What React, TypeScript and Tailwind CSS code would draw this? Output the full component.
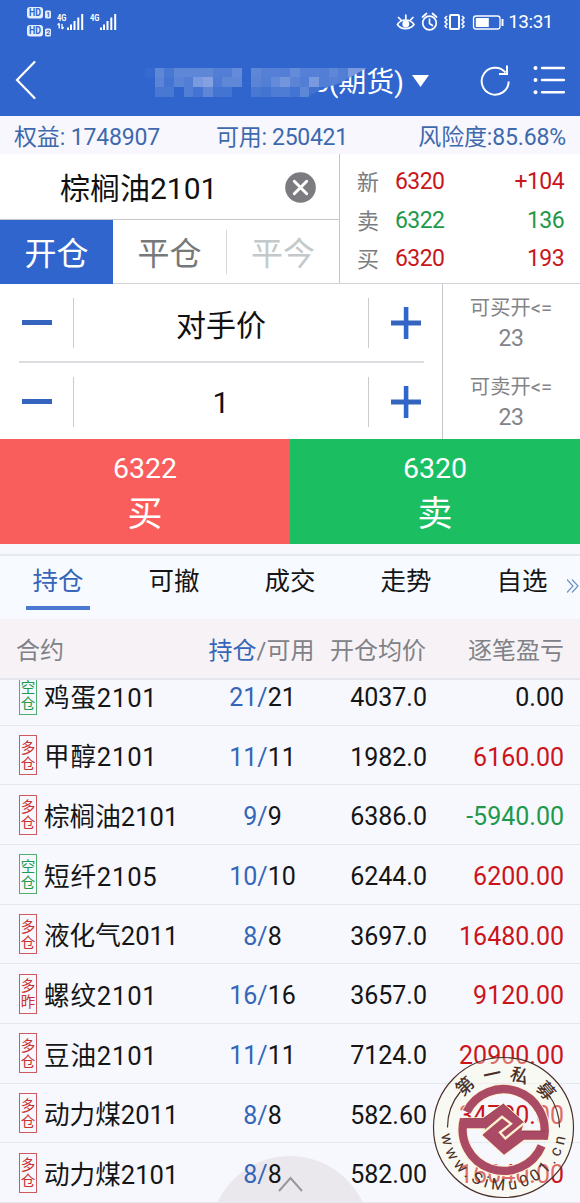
import React from 'react';

type Side = '多仓' | '空仓' | '多昨';

interface Position {
    side: Side;
    name: string;
    held: string;
    usable: string;
    price: string;
    profit: string;
}

const positions: Position[] = [
    { side: '空仓', name: '鸡蛋2101', held: '21', usable: '21', price: '4037.0', profit: '0.00' },
    { side: '多仓', name: '甲醇2101', held: '11', usable: '11', price: '1982.0', profit: '6160.00' },
    { side: '多仓', name: '棕榈油2101', held: '9', usable: '9', price: '6386.0', profit: '-5940.00' },
    { side: '空仓', name: '短纤2105', held: '10', usable: '10', price: '6244.0', profit: '6200.00' },
    { side: '多仓', name: '液化气2011', held: '8', usable: '8', price: '3697.0', profit: '16480.00' },
    { side: '多昨', name: '螺纹2101', held: '16', usable: '16', price: '3657.0', profit: '9120.00' },
    { side: '多仓', name: '豆油2101', held: '11', usable: '11', price: '7124.0', profit: '20900.00' },
    { side: '多仓', name: '动力煤2011', held: '8', usable: '8', price: '582.60', profit: '34780.00' },
    { side: '多仓', name: '动力煤2101', held: '8', usable: '8', price: '582.00', profit: '16040.00' },
];

const quotes = [
    { label: '新', price: '6320', volume: '+104', color: 'text-[#c8161d]' },
    { label: '卖', price: '6322', volume: '136', color: 'text-[#22994a]' },
    { label: '买', price: '6320', volume: '193', color: 'text-[#c8161d]' },
];

const tabs = ['持仓', '可撤', '成交', '走势', '自选'];

// opacity of each block in the masked account number, row by row
const mask = [
    [0.04, 0.27, 0.15, 0.27, 0.27, 0.27, 0.27, 0.2, 0.2, 0.3, 0, 0.27, 0.22, 0.22, 0.2, 0.3, 0.22, 0.22, 0.2, 0.28, 0.2, 0.42, 0.42, 0.35],
    [0, 0.25, 0.12, 0.25, 0.2, 0.42, 0.48, 0.18, 0.27, 0.27, 0, 0.25, 0.2, 0.3, 0.38, 0.25, 0.2, 0.42, 0.2, 0.22, 0.2, 0.2, 0.3, 0.3],
    [0, 0.15, 0.15, 0, 0.2, 0.12, 0.27, 0.12, 0.12, 0, 0, 0.15, 0.12, 0.18, 0.18, 0.12, 0.28, 0.1, 0.05, 0.05, 0, 0, 0, 0],
];

const Signal: React.FC<{ arrows?: boolean }> = ({ arrows }) => (
    <svg className="h-[18px] w-[30px]" viewBox="0 0 30 18" fill="#fff">
        <text x="0" y="8" fontSize="9.5" fontWeight="700" textLength="9.5" lengthAdjust="spacingAndGlyphs">4G</text>
        {arrows && <path d="M2.2 10.5v5M.7 12l1.5-1.7M5 11v5M6.7 14.2L5 16.2" stroke="#fff" strokeWidth="1.3" fill="none" />}
        <path d="M10 14.5h2V17h-2zM13 11.5h2V17h-2zM16.5 8h2v9h-2zM20.3 4.5h2V17h-2zM24.2 1h2v16h-2z" />
    </svg>
);

const HdBadge: React.FC<{ n: string }> = ({ n }) => (
    <svg className="h-[13px] w-[25px]" viewBox="0 0 25 13">
        <rect x="0" y="0" width="16" height="11.5" rx="3" fill="#e6eefc" />
        <text x="2" y="9.3" fontSize="10" fontWeight="700" fill="#2f65cd" textLength="12" lengthAdjust="spacingAndGlyphs">HD</text>
        <rect x="18" y="3.5" width="6" height="8" rx="1.5" fill="#e6eefc" />
        <text x="19" y="10.2" fontSize="7.5" fontWeight="700" fill="#2f65cd">{n}</text>
    </svg>
);

const StatusBar: React.FC = () => (
    <div className="flex h-[46px] items-start justify-between pt-[7px] pl-[27px] pr-[27px]">
        <div className="flex">
            <div className="flex flex-col gap-[5px]">
                <HdBadge n="1" />
                <HdBadge n="2" />
            </div>
            <div className="mt-[6px] ml-[5px] flex gap-[3px]">
                <Signal arrows />
                <Signal />
            </div>
        </div>
        <div className="mt-[4px] flex items-center">
            <svg className="-mt-[2px] h-[20px] w-[108px]" viewBox="0 0 108 20" fill="none" stroke="#fff" strokeWidth="1.7">
                <path d="M1.5 13.5C5 7.5 14 7.5 18 13.5C14 19 5 19 1.5 13.5z" />
                <circle cx="9.8" cy="13" r="2.6" fill="#fff" />
                <path d="M9.8 8V4M5 9L2.5 6.5M14.5 9L17 6.5" strokeLinecap="round" />
                <circle cx="33.5" cy="12" r="6.8" />
                <path d="M33.5 8v4.5l3 2M26.5 6l4-3.5M40.5 6l-4-3.5" strokeLinecap="round" />
                <rect x="54" y="4" width="9" height="14" rx="1" strokeWidth="2" />
                <path d="M51 5l-2 2 2 2-2 2 2 2-2 2 2 2M66 5l2 2-2 2 2 2-2 2 2 2-2 2" strokeWidth="1.5" />
                <rect x="77.5" y="5" width="26.5" height="13" rx="2.5" strokeWidth="1.3" />
                <rect x="79.8" y="7" width="13" height="9" fill="#fff" stroke="none" />
                <path d="M106.5 8v7" strokeWidth="2" />
            </svg>
            <span className="ml-[4px] text-[19px] leading-[22px] tracking-[-0.5px]">13:31</span>
        </div>
    </div>
);

const NavBar: React.FC = () => (
    <div className="relative flex h-[70px] items-center">
        <svg className="ml-[15px] h-[40px] w-[22px] shrink-0" viewBox="0 0 22 40" fill="none" stroke="#fff" strokeWidth="2.2" strokeLinecap="round">
            <path d="M19.5 1L2 19l17.5 18" />
        </svg>
        <div className="ml-[276px] flex w-[132px] shrink-0 items-center">
            <span className="w-[93px] pt-[3px] text-[28px] leading-[40px] whitespace-nowrap">5(期货)</span>
            <svg className="ml-[6px] h-[12px] w-[17px]" viewBox="0 0 17 12" fill="#fff"><path d="M0 0h17L8.5 12z" /></svg>
        </div>
        <svg className="absolute top-[17px] left-[140px] h-[40px] w-[240px]" viewBox="0 0 240 40" shapeRendering="crispEdges">
            <clipPath id="mask-edge">
                <path d="M0 0H240V4.7H227L200 20L182 26L168 34H0z" />
            </clipPath>
            <g clipPath="url(#mask-edge)">
                <path d="M0 0H240V40H0z" fill="#2f65cd" />
                {mask.map((row, y) =>
                    row.map((o, x) => (
                        <rect key={`${y}-${x}`} x={5 + x * 9.67} y={4.7 + y * 9.67} width="9.67" height="9.67" fill="#dfe4f5" fillOpacity={o} />
                    ))
                )}
            </g>
        </svg>
        <svg className="ml-[35px] h-[34px] w-[30px] shrink-0" viewBox="0 0 30 34" fill="none" stroke="#fff" strokeWidth="2">
            <path d="M25.5 8.5A13.5 13.5 0 1 0 28.7 17.5" />
            <path d="M27 1.5v8.5h-8" />
        </svg>
        <svg className="ml-[23px] h-[30px] w-[32px] shrink-0" viewBox="0 0 32 30" stroke="#fff" strokeWidth="2.4" fill="#fff" strokeLinecap="round">
            <path d="M9 2h22M9 14h22M9 26.3h22" />
            <path d="M2.5 2h.01M2.5 14h.01M2.5 26.3h.01" strokeWidth="4" />
        </svg>
    </div>
);

const Stepper: React.FC<{ value: string }> = ({ value }) => (
    <div className="flex h-[77px] items-center">
        <div className="flex w-[73px] justify-center">
            <div className="h-[5px] w-[30px] bg-[#3564bf]" />
        </div>
        <div className={`flex h-[50px] flex-1 items-center justify-center border-x border-[#c9cbce] text-[30px] text-[#111] ${value === '1' ? 'pt-[1px]' : 'pt-[5px]'}`}>{value}</div>
        <div className="flex w-[73px] justify-center">
            <svg className="h-[32px] w-[30px]" viewBox="0 0 30 32" fill="#2f65cd"><path d="M0 13.5h30v5H0z" fill="#3564bf" /><path d="M12.8 0h4.6v32h-4.6z" /></svg>
        </div>
    </div>
);

const OrderPanel: React.FC = () => (
    <div className="bg-white">
        <div className="flex h-[130px] border-b border-[#cfd2d6]">
            <div className="w-[340px] border-r border-[#c4c6ca]">
                <div className="flex h-[66px] items-center justify-between border-b border-[#c4c6ca] pr-[23px] pl-[60px]">
                    <span className="pt-[4px] text-[30px] text-[#111]">棕榈油2101</span>
                    <svg className="mt-[1px] h-[31px] w-[31px]" viewBox="0 0 31 31">
                        <circle cx="15.5" cy="15.5" r="15.3" fill="#7c7b80" />
                        <path d="M9.3 9.3l12.4 12.4M21.7 9.3L9.3 21.7" stroke="#fff" strokeWidth="3" strokeLinecap="round" />
                    </svg>
                </div>
                <div className="flex h-[64px] text-[32px]">
                    <div className="flex w-[113px] items-center justify-center bg-[#2f65cd] pt-[4px] text-white">开仓</div>
                    <div className="flex w-[113px] items-center justify-center pt-[4px] text-[#77787a]">平仓</div>
                    <div className="my-auto h-[44px] w-px bg-[#d5dadc]" />
                    <div className="flex flex-1 items-center justify-center pt-[4px] text-[#c3c9ca]">平今</div>
                </div>
            </div>
            <div className="flex flex-1 flex-col pt-[9px] pr-[16px] pl-[17px]">
                {quotes.map((q) => (
                    <div key={q.label} className={`flex h-[38.7px] items-center text-[23px] ${q.color}`}>
                        <span className="w-[38px] text-[22px] text-[#7c7d80]">{q.label}</span>
                        <span className="tracking-[-0.6px]">{q.price}</span>
                        <span className="ml-auto tracking-[-0.6px]">{q.volume}</span>
                    </div>
                ))}
            </div>
        </div>
        <div className="flex h-[155px]">
            <div className="w-[442px]">
                <Stepper value="对手价" />
                <div className="mr-[18px] ml-[19px] h-[2px] bg-[#dcdde0]" />
                <Stepper value="1" />
            </div>
            <div className="flex flex-1 flex-col border-l border-[#c4c6ca] pt-[9px] pr-[1px] text-center text-[#838487]">
                {['可买开<=', '可卖开<='].map((label) => (
                    <div key={label} className="h-[79px] shrink-0">
                        <div className="text-[20.3px] leading-[31px]">{label}</div>
                        <div className="text-[23px] leading-[30px] tracking-[-0.5px]">23</div>
                    </div>
                ))}
            </div>
        </div>
    </div>
);

const PositionRow: React.FC<{ row: Position }> = ({ row }) => {
    const short = row.side === '空仓';
    const value = parseFloat(row.profit);
    const profitColor = value > 0 ? 'text-[#cb151b]' : value < 0 ? 'text-[#22994a]' : 'text-[#151515]';
    return (
        <div className="flex h-[59.67px] shrink-0 items-center border-b border-[#e6e8f0] pr-[16px] pl-[19px] text-[25px] text-[#151515]">
            <div className={`flex h-[40px] w-[18px] flex-col items-center justify-center border pt-[3px] text-[14.5px] leading-[16px] ${short ? 'border-[#52ae6d] text-[#22994a]' : 'border-[#cf5a5e] text-[#c9302f]'}`}>
                <span>{row.side[0]}</span>
                <span>{row.side[1]}</span>
            </div>
            <span className={`ml-[7px] w-[146px] pt-[5px] text-[25.6px] whitespace-nowrap ${row.name.length === 6 ? 'tracking-[0.8px]' : ''}`}>{row.name}</span>
            <span className="w-[145px] pt-[5px] text-center"><span className="text-[#3566b8]">{row.held}/</span>{row.usable}</span>
            <span className="w-[92px] pt-[5px] text-right">{row.price}</span>
            <span className={`ml-auto pt-[5px] ${profitColor}`}>{row.profit}</span>
        </div>
    );
};

const Stamp: React.FC = () => (
    <svg className="absolute top-[1056px] left-[432px] h-[143px] w-[143px]" viewBox="-71.5 -71.5 143 143" fill="none">
        <circle r="57.5" stroke="#fffbe6" strokeOpacity="0.38" strokeWidth="25" />
        <circle r="70" stroke="#4b3028" strokeWidth="1.2" />
        <path d="M-56 0A56 56 0 0 1 -43 -36M56 0A56 56 0 0 0 45 -33" stroke="#4b3028" strokeWidth="1.2" />
        <g fill="#4b3028" fontSize="18" fontWeight="500" textAnchor="middle">
            <text transform="rotate(-43) translate(0 -50)">第</text>
            <text transform="rotate(-12) translate(0 -48)">一</text>
            <text transform="rotate(17) translate(0 -48)">私</text>
            <text transform="rotate(49) translate(0 -50)">募</text>
        </g>
        <path id="stamp-arc" d="M-62.5 5A62.7 62.7 0 0 0 62.5 5" />
        <text fill="#4b3028" fontSize="16" textLength="180">
            <textPath href="#stamp-arc" startOffset="2" textLength="180">www.SiMu001.cn</textPath>
        </text>
        {/* emblem: two interlocking hooks */}
        <g transform="scale(.3333) translate(-160.5 -153)">
            <g stroke="#fff3cf" strokeWidth="31">
                <path d="M50 106A123.5 123.5 0 0 1 281 188" />
                <path d="M42 128A123.5 123.5 0 0 0 275 208" />
            </g>
            <path d="M30 125H100L160 82L222 138L214 163H296L288 190H222L162 235L98 176L106 155H34z" fill="#ab4a65" stroke="#fff3cf" strokeWidth="6" />
            <g stroke="#ab4a65" strokeWidth="25">
                <path d="M50 106A123.5 123.5 0 0 1 281 188" />
                <path d="M42 128A123.5 123.5 0 0 0 275 208" />
            </g>
            <path d="M30 125H100L160 82L222 138L214 163H296L288 190H222L162 235L98 176L106 155H34z" fill="#ab4a65" />
            <path d="M98 170L156 121L183 142L150 168L166 186L222 140" stroke="#fff3cf" strokeWidth="7" />
            <path d="M40 126H100L160 83L220 137M214 164H284" stroke="#8b3a51" strokeWidth="2" />
        </g>
    </svg>
);

export default function App() {
    return (
        <div className="relative flex h-[1203px] w-[580px] flex-col overflow-hidden bg-[#f6f8fe] font-['Roboto','Noto_Sans_CJK_SC',sans-serif]">
            <header className="h-[116px] bg-[#2f65cd] text-white">
                <StatusBar />
                <NavBar />
            </header>
            <div className="flex h-[38px] items-center bg-[#f7f7fd] pt-[6px] pr-[14px] pl-[14px] text-[23px] tracking-[-0.15px] text-[#3e69ad]">
                <span className="w-[202px]">权益: 1748907</span>
                <span className="tracking-[-0.3px]">可用: 250421</span>
                <span className="ml-auto">风险度:85.68%</span>
            </div>
            <OrderPanel />
            <div className="flex h-[105px] text-center text-white">
                <div className="flex-1 bg-[#fa5e5c]">
                    <div className="mt-[12px] text-[28.5px] leading-[36px]">6322</div>
                    <div className="text-[35px] leading-[56px]">买</div>
                </div>
                <div className="flex-1 bg-[#1bbf62]">
                    <div className="mt-[12px] text-[28.5px] leading-[36px]">6320</div>
                    <div className="text-[35px] leading-[56px]">卖</div>
                </div>
            </div>
            <div className="mt-[10px] flex h-[65px] border-t-2 border-[#e8e8f0] bg-[#f7fbff] text-[25.5px] text-[#151515]">
                {tabs.map((tab, i) => (
                    <div key={tab} className={`flex w-[116px] flex-col items-center pt-[4px] ${i === 0 ? 'text-[#3566b8]' : ''}`}>
                        <span className="leading-[42px]">{tab}</span>
                        {i === 0 && <span className="mt-[4px] h-[4px] w-[64px] bg-[#4b79d0]" />}
                    </div>
                ))}
                <svg className="absolute top-[579px] left-[567px] h-[14px] w-[12px]" viewBox="0 0 12 14" fill="none" stroke="#6d93c4" strokeWidth="1.2">
                    <path d="M0 .5l6 6.5-6 6.5M5 .5L11 7l-6 6.5" />
                </svg>
            </div>
            <div className="flex h-[61px] shrink-0 items-center border-b-2 border-[#e6e7ee] bg-[#f7f2f6] pt-[4px] pr-[16px] pl-[16px] text-[24px] text-[#808287]">
                <span className="w-[173px]">合约</span>
                <span className="w-[145px] text-center whitespace-nowrap">
                    <span className="text-[#3566b8]">持仓</span>/可用
                </span>
                <span className="-ml-[4px] w-[93px] whitespace-nowrap">开仓均价</span>
                <span className="ml-auto">逐笔盈亏</span>
            </div>
            <svg className="absolute top-[1156px] left-[210px] h-[47px] w-[160px]" viewBox="0 0 160 47" fill="none">
                <circle cx="80" cy="80" r="80" fill="#d9cdd2" fillOpacity="0.38" />
                <path d="M69 35l11.5-13L92 35" stroke="#97979b" strokeWidth="2" />
            </svg>
            <div className="relative flex flex-1 flex-col justify-end overflow-hidden">
                {positions.map((row) => <PositionRow key={row.name} row={row} />)}
            </div>
            <Stamp />
        </div>
    );
}
